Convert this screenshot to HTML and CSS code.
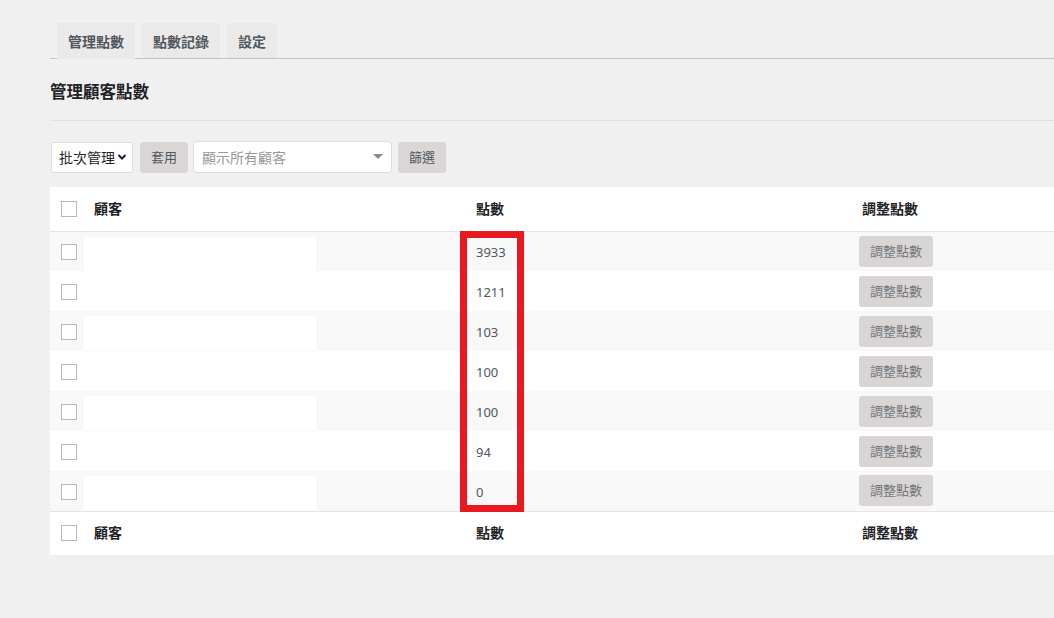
FILE: index.html
```html
<!DOCTYPE html>
<html lang="zh-Hant">
<head>
    <meta charset="UTF-8">
    <meta name="viewport" content="width=device-width, initial-scale=1.0">
    <title>管理顧客點數</title>
    <link rel="stylesheet" href="styles.css">
</head>
<body>
    <div class="wrap">
        <nav class="tabs">
            <a class="tab active">管理點數</a>
            <a class="tab">點數記錄</a>
            <a class="tab">設定</a>
        </nav>

        <h1 class="page-title">管理顧客點數</h1>
        <hr class="sep">

        <div class="toolbar">
            <div class="select">
                <span>批次管理</span>
                <svg width="10" height="8" viewBox="0 0 10 8"><path d="M1.5 2 L5 5.5 L8.5 2" fill="none" stroke="#1d2327" stroke-width="2"/></svg>
            </div>
            <button class="btn">套用</button>
            <div class="select2">
                <span>顯示所有顧客</span>
                <svg width="10" height="6" viewBox="0 0 10 6"><path d="M0 0 L10 0 L5 5 Z" fill="#888"/></svg>
            </div>
            <button class="btn">篩選</button>
        </div>

        <div class="table-box">
            <table class="list">
                <colgroup>
                    <col class="w-check">
                    <col class="w-name">
                    <col class="w-points">
                    <col>
                </colgroup>
                <thead>
                    <tr>
                        <th class="col-check"><span class="check"></span></th>
                        <th class="col-name">顧客</th>
                        <th class="col-points">點數</th>
                        <th class="col-action">調整點數</th>
                    </tr>
                </thead>
                <tbody>
                    <tr class="alt">
                        <td class="col-check"><span class="check"></span></td>
                        <td class="col-name"><div class="hidden-name"></div></td>
                        <td class="col-points">3933</td>
                        <td class="col-action"><button class="btn small">調整點數</button></td>
                    </tr>
                    <tr>
                        <td class="col-check"><span class="check"></span></td>
                        <td class="col-name"></td>
                        <td class="col-points">1211</td>
                        <td class="col-action"><button class="btn small">調整點數</button></td>
                    </tr>
                    <tr class="alt">
                        <td class="col-check"><span class="check"></span></td>
                        <td class="col-name"><div class="hidden-name"></div></td>
                        <td class="col-points">103</td>
                        <td class="col-action"><button class="btn small">調整點數</button></td>
                    </tr>
                    <tr>
                        <td class="col-check"><span class="check"></span></td>
                        <td class="col-name"></td>
                        <td class="col-points">100</td>
                        <td class="col-action"><button class="btn small">調整點數</button></td>
                    </tr>
                    <tr class="alt">
                        <td class="col-check"><span class="check"></span></td>
                        <td class="col-name"><div class="hidden-name"></div></td>
                        <td class="col-points">100</td>
                        <td class="col-action"><button class="btn small">調整點數</button></td>
                    </tr>
                    <tr>
                        <td class="col-check"><span class="check"></span></td>
                        <td class="col-name"></td>
                        <td class="col-points">94</td>
                        <td class="col-action"><button class="btn small">調整點數</button></td>
                    </tr>
                    <tr class="alt">
                        <td class="col-check"><span class="check"></span></td>
                        <td class="col-name"><div class="hidden-name"></div></td>
                        <td class="col-points">0</td>
                        <td class="col-action"><button class="btn small">調整點數</button></td>
                    </tr>
                </tbody>
                <tfoot>
                    <tr>
                        <th class="col-check"><span class="check"></span></th>
                        <th class="col-name">顧客</th>
                        <th class="col-points">點數</th>
                        <th class="col-action">調整點數</th>
                    </tr>
                </tfoot>
            </table>
            <div class="highlight"></div>
        </div>
    </div>
</body>
</html>
```

FILE: styles.css
```css
body {
    margin: 0;
    background: #f0f0f1;
    font-family: "Noto Sans", "Noto Sans CJK TC", sans-serif;
    color: #3c434a;
}

.wrap {
    padding: 23px 0 0 50px;
}

.tabs {
    display: flex;
    gap: 7px;
    padding-left: 7px;
    border-bottom: 1px solid #c3c4c7;
    height: 35px;
}

.tab {
    display: flex;
    align-items: center;
    padding: 0 11px;
    height: 35px;
    background: #ebe9e9;
    font-size: 14px;
    font-weight: bold;
    color: #50575e;
}

.tab.active {
    height: 36px;
}

.page-title {
    margin: 0;
    padding-top: 19px;
    font-size: 16.5px;
    line-height: 28px;
    font-weight: bold;
    color: #1d2327;
}

.sep {
    margin: 14px 0 0;
    border: none;
    border-top: 1px solid #e2e2e2;
}

.toolbar {
    display: flex;
    align-items: center;
    margin-top: 20px;
    height: 32px;
}

.select {
    box-sizing: border-box;
    width: 82px;
    height: 31px;
    margin-left: 1px;
    background: white;
    border: 1px solid #dcdcde;
    border-radius: 3px;
    display: flex;
    align-items: center;
    justify-content: space-between;
    padding: 0 5px 0 7px;
    font-size: 14px;
    color: #1d2327;
}

.btn {
    box-sizing: border-box;
    height: 31px;
    width: 48px;
    margin-left: 7px;
    border: none;
    border-radius: 3px;
    background: #dbd6d6;
    color: #50575e;
    font-family: inherit;
    font-size: 13px;
    line-height: 31px;
    padding: 0;
}

.select2 {
    box-sizing: border-box;
    width: 199px;
    height: 32px;
    margin-left: 5px;
    background: white;
    border: 1px solid #dcdcde;
    border-radius: 4px;
    display: flex;
    align-items: center;
    justify-content: space-between;
    padding: 0 8px 0 8px;
    font-size: 14px;
    color: #999;
}

.select2 + .btn {
    margin-left: 6px;
}

.table-box {
    position: relative;
    margin-top: 14px;
}

.list {
    width: 100%;
    border-collapse: collapse;
    table-layout: fixed;
    background: white;
}

.w-check {
    width: 34px;
}

.w-name {
    width: 382px;
}

.w-points {
    width: 386px;
}

.list th,
.list td {
    box-sizing: border-box;
    padding: 0;
    line-height: 20px;
}

.list th {
    height: 44px;
    text-align: left;
    font-size: 14px;
    font-weight: bold;
    color: #1d2327;
}

.list thead tr {
    border-bottom: 1px solid #e4e4e4;
}

.list tfoot tr {
    border-top: 1px solid #e4e4e4;
}

.list td {
    height: 40px;
    padding-top: 2px;
    font-size: 13px;
    color: #50575e;
}

.list td.col-action {
    padding-top: 0;
}

.list tr.alt td {
    background: #f8f8f8;
}

.list .col-check {
    padding-left: 11px;
}

.list th.col-name {
    padding-left: 10px;
}

.list .col-points {
    padding-left: 10px;
}

.list th.col-action {
    padding-left: 10px;
}

.list td.col-action {
    padding-left: 7px;
}

.check {
    display: block;
    box-sizing: border-box;
    width: 16px;
    height: 16px;
    border: 1px solid #b5b8bc;
    background: white;
}

.list tr.alt td.col-name {
    padding-top: 5px;
    vertical-align: top;
}

.hidden-name {
    width: 232px;
    height: 34px;
    background: white;
}

.btn.small {
    display: block;
    width: 74px;
    margin: 0;
    background: #d9d5d5;
    color: #72777c;
}

.highlight {
    position: absolute;
    left: 410px;
    top: 44px;
    width: 64px;
    height: 281px;
    box-sizing: border-box;
    border: 7px solid #e8191f;
}
```
